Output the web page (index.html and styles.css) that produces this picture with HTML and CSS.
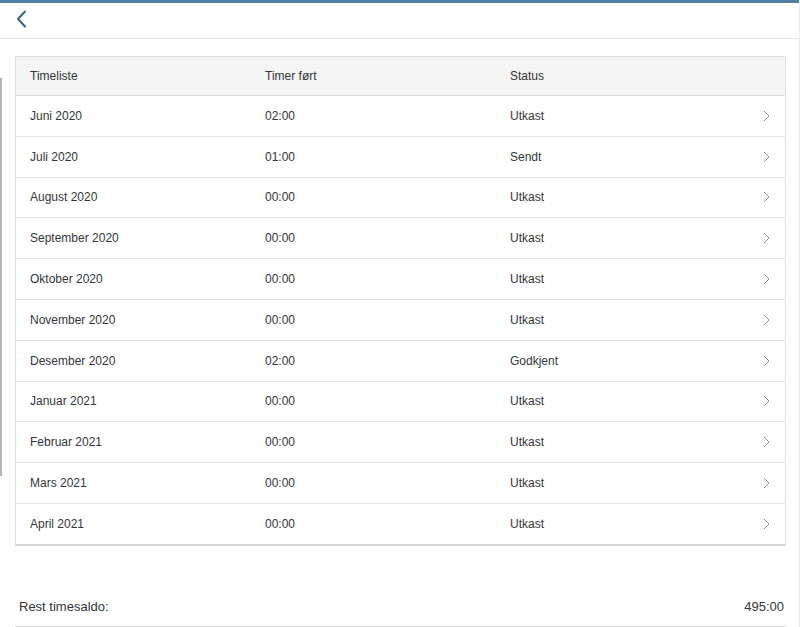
FILE: index.html
```html
<!DOCTYPE html>
<html lang="no">
<head>
    <meta charset="UTF-8">
    <title>Timelister</title>
    <link rel="stylesheet" href="styles.css">
</head>
<body>
    <header class="topbar">
        <button class="back" type="button" aria-label="Tilbake">
            <svg width="12" height="18" viewBox="0 0 12 18"><path d="M10 1.5 L3 9 L10 16.5" fill="none" stroke="#35618c" stroke-width="2" stroke-linecap="round" stroke-linejoin="round"/></svg>
        </button>
    </header>

    <div class="edge"></div>

    <main class="page">
        <div class="list">
            <div class="row head">
                <span>Timeliste</span>
                <span>Timer ført</span>
                <span>Status</span>
                <span></span>
            </div>
            <div class="row"><span>Juni 2020</span><span>02:00</span><span>Utkast</span><svg class="nav" viewBox="0 0 7 12"><path d="M1 1 L6 6 L1 11"/></svg></div>
            <div class="row"><span>Juli 2020</span><span>01:00</span><span>Sendt</span><svg class="nav" viewBox="0 0 7 12"><path d="M1 1 L6 6 L1 11"/></svg></div>
            <div class="row"><span>August 2020</span><span>00:00</span><span>Utkast</span><svg class="nav" viewBox="0 0 7 12"><path d="M1 1 L6 6 L1 11"/></svg></div>
            <div class="row"><span>September 2020</span><span>00:00</span><span>Utkast</span><svg class="nav" viewBox="0 0 7 12"><path d="M1 1 L6 6 L1 11"/></svg></div>
            <div class="row"><span>Oktober 2020</span><span>00:00</span><span>Utkast</span><svg class="nav" viewBox="0 0 7 12"><path d="M1 1 L6 6 L1 11"/></svg></div>
            <div class="row"><span>November 2020</span><span>00:00</span><span>Utkast</span><svg class="nav" viewBox="0 0 7 12"><path d="M1 1 L6 6 L1 11"/></svg></div>
            <div class="row"><span>Desember 2020</span><span>02:00</span><span>Godkjent</span><svg class="nav" viewBox="0 0 7 12"><path d="M1 1 L6 6 L1 11"/></svg></div>
            <div class="row"><span>Januar 2021</span><span>00:00</span><span>Utkast</span><svg class="nav" viewBox="0 0 7 12"><path d="M1 1 L6 6 L1 11"/></svg></div>
            <div class="row"><span>Februar 2021</span><span>00:00</span><span>Utkast</span><svg class="nav" viewBox="0 0 7 12"><path d="M1 1 L6 6 L1 11"/></svg></div>
            <div class="row"><span>Mars 2021</span><span>00:00</span><span>Utkast</span><svg class="nav" viewBox="0 0 7 12"><path d="M1 1 L6 6 L1 11"/></svg></div>
            <div class="row"><span>April 2021</span><span>00:00</span><span>Utkast</span><svg class="nav" viewBox="0 0 7 12"><path d="M1 1 L6 6 L1 11"/></svg></div>
        </div>

        <div class="saldo">
            <span>Rest timesaldo:</span>
            <span>495:00</span>
        </div>
    </main>
</body>
</html>
```

FILE: styles.css
```css
/* General */
body {
    margin: 0;
    font-family: "Liberation Sans", Arial, sans-serif;
    font-size: 12px;
    color: #32363a;
    background: #fff;
    border-right: 1px solid #ececec;
    min-height: 627px;
    box-sizing: border-box;
}

.topbar {
    border-top: 3px solid #4f7ea6;
    border-bottom: 1px solid #e5e5e5;
    height: 35px;
    display: flex;
    align-items: center;
    padding-left: 15px;
}

.back {
    border: 0;
    background: none;
    padding: 0;
    display: flex;
    margin-top: -3px;
}

/* grey scroll bar on the left */
.edge {
    position: absolute;
    left: 0;
    top: 78px;
    width: 2px;
    height: 398px;
    background: #b5b5b5;
}

.page {
    padding: 17px 13px 0 15px;
}

/* List */
.list {
    border: 1px solid #e0e0e0;
    border-bottom: 2px solid #d6d6d6;
}

.row {
    display: grid;
    grid-template-columns: 235px 245px 1fr 22px;
    align-items: center;
    height: 39.8px;
    padding-left: 14px;
    border-top: 1px solid #e5e5e5;
}

.row:first-child {
    border-top: 0;
}

.head {
    background: #f5f5f5;
    height: 38px;
    border-bottom: 1px solid #dcdcdc;
}

.head + .row {
    border-top: 0;
}

.nav {
    width: 7px;
    height: 12px;
    fill: none;
    stroke: #8f8f8f;
    stroke-width: 1;
}

/* Bottom */
.saldo {
    display: flex;
    justify-content: space-between;
    margin-top: 53px;
    padding: 0 2px 12px 4px;
    font-size: 13px;
    border-bottom: 1px solid #d9d9d9;
}
```
